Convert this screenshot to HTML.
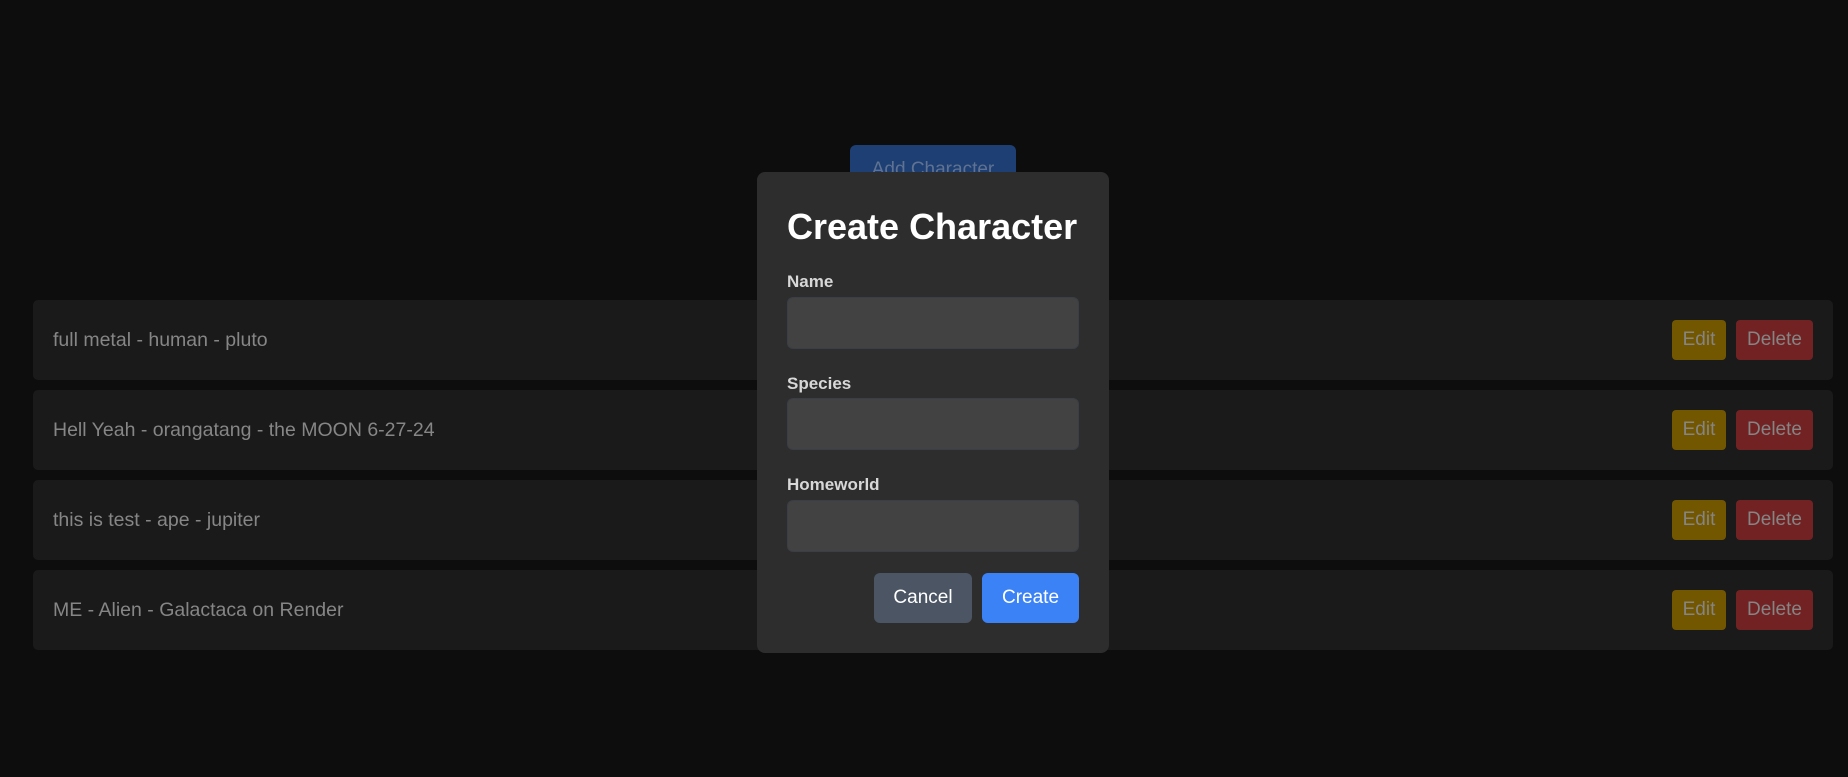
<!DOCTYPE html>
<html><head><meta charset="utf-8"><style>
*{box-sizing:border-box;margin:0;padding:0}
body{width:1848px;height:777px;background:#0d0d0d;font-family:"Liberation Sans",sans-serif;position:relative;overflow:hidden}
.add{position:absolute;left:850px;top:145px;width:166px;height:50px;background:#1e3f73;border-radius:6px;color:#5f7291;font-size:19px;text-align:center;line-height:50px}
.row{position:absolute;left:33px;width:1800px;height:80px;background:#1a1a1a;border-radius:5px}
.row span{position:absolute;left:20px;top:0;line-height:80px;font-size:19.5px;color:#868686}
.b{position:absolute;top:20px;height:40px;border-radius:4px;font-size:19px;color:#858585;text-align:center;line-height:40px}
.e{left:1639px;width:54px;background:#735600}
.d{left:1703px;width:77px;background:#722222}
.modal{position:absolute;left:757px;top:172px;width:352px;height:481px;background:#2d2d2d;border-radius:8px}
h1{position:absolute;left:30px;top:34px;font-size:36px;font-weight:bold;color:#fff;white-space:nowrap}
label{position:absolute;left:30px;font-size:17px;font-weight:bold;color:#d8d8d8}
.in{position:absolute;left:30px;width:292px;height:52px;background:#424242;border:1px solid #3a3e45;border-radius:6px}
.btn{position:absolute;top:401px;height:50px;border-radius:6px;color:#fff;font-size:19px;text-align:center;line-height:50px}
</style></head><body>
<div class="add">Add Character</div>
<div class="row" style="top:300px"><span>full metal - human - pluto</span><div class="b e">Edit</div><div class="b d">Delete</div></div>
<div class="row" style="top:390px"><span>Hell Yeah - orangatang - the MOON 6-27-24</span><div class="b e">Edit</div><div class="b d">Delete</div></div>
<div class="row" style="top:480px"><span>this is test - ape - jupiter</span><div class="b e">Edit</div><div class="b d">Delete</div></div>
<div class="row" style="top:570px"><span>ME - Alien - Galactaca on Render</span><div class="b e">Edit</div><div class="b d">Delete</div></div>
<div class="modal">
<h1>Create Character</h1>
<label style="top:100px">Name</label><div class="in" style="top:125px"></div>
<label style="top:202px">Species</label><div class="in" style="top:226px"></div>
<label style="top:303px">Homeworld</label><div class="in" style="top:328px"></div>
<div class="btn" style="left:117px;width:98px;background:#4b5563">Cancel</div>
<div class="btn" style="left:225px;width:97px;background:#3b82f6">Create</div>
</div>
</body></html>
